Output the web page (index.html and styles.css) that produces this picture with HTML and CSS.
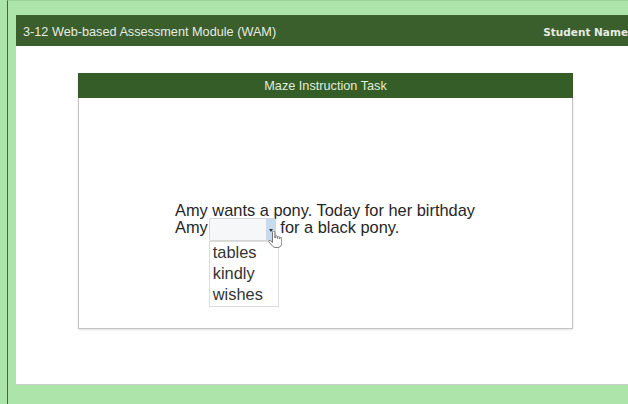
FILE: index.html
```html
<!DOCTYPE html>
<html lang="en">
<head>
<meta charset="utf-8">
<title>WAM - Maze Instruction Task</title>
<link rel="stylesheet" href="styles.css">
</head>
<body>
<div class="frame">
  <div class="app">
    <header class="topbar">
      <span class="app-name">3-12 Web-based Assessment Module (WAM)</span>
      <span class="student">Student Name</span>
    </header>
    <main class="panel">
      <section class="task">
        <h1 class="task-title">Maze Instruction Task</h1>
        <div class="task-body">
          <div class="passage">
            <div class="line">Amy wants a pony. Today for her birthday</div>
            <div class="line">Amy<span class="choice"><span class="choice-arrow"></span><span class="choice-list"><span class="option">tables</span><span class="option">kindly</span><span class="option">wishes</span></span><svg class="pointer" width="14" height="18" viewBox="0 0 14 18"><path d="M4.5 1.2c0-.7.5-1.2 1.2-1.2s1.2.5 1.2 1.2V7h.3V5.8c0-.6.5-1 1.1-1s1.1.4 1.1 1V7.4h.2V6.6c0-.6.5-1 1-1s1 .4 1 1v1.2h.2v-.3c0-.6.4-1 1-1s1 .4 1 1v4.3c0 2.6-1.6 4.7-4 4.7H7.3c-1.2 0-2.2-.6-2.9-1.6L1 11.1c-.4-.5-.3-1.2.2-1.6.5-.4 1.2-.3 1.6.2l1.7 1.9V1.2z" fill="#fff" stroke="#666" stroke-width=".9"/></svg></span> for a black pony.</div>
          </div>
        </div>
      </section>
    </main>
  </div>
</div>
</body>
</html>
```
FILE: styles.css
```css
html, body {
  margin: 0;
  padding: 0;
}

body {
  width: 628px;
  height: 404px;
  overflow: hidden;
  background: #ade4a9;
  font-family: "Liberation Sans", Arial, sans-serif;
}

.frame {
  margin-left: 7px;
  height: 404px;
  box-sizing: border-box;
  border-left: 1px solid #40683b;
  border-top: 1px solid #9ad596;
  padding: 14px 0 0 8px;
}

.app {
  width: 626px;
}

.topbar {
  display: flex;
  align-items: center;
  justify-content: space-between;
  height: 31px;
  padding: 2px 0 0 7px;
  box-sizing: border-box;
  background: #3a5e2c;
  color: #e6ebe3;
}

.app-name {
  font-size: 12.7px;
}

.student {
  font-family: "DejaVu Sans", Verdana, sans-serif;
  font-weight: bold;
  font-size: 10.5px;
  padding-right: 14px;
}

.panel {
  height: 339px;
  box-sizing: border-box;
  background: #fff;
  border-bottom: 1px solid #c9cfc8;
  padding: 27px 0 0 62px;
}

.task {
  width: 495px;
  box-shadow: 0 1px 2px rgba(0, 0, 0, 0.12);
}

.task-title {
  margin: 0;
  height: 25px;
  line-height: 26px;
  background: #355d27;
  color: #e2ecdb;
  font-size: 12.7px;
  font-weight: normal;
  text-align: center;
}

.task-body {
  height: 231px;
  box-sizing: border-box;
  border: 1px solid #c4c4c4;
  border-top: none;
  padding: 104px 0 0 96px;
}

.passage {
  font-size: 16.4px;
  line-height: 17px;
  color: #262626;
}

.line {
  white-space: nowrap;
}

.choice {
  position: relative;
  display: inline-block;
  vertical-align: top;
  width: 67px;
  height: 23px;
  box-sizing: border-box;
  margin: -1px 0 -5px 1px;
  border: 1px solid #d3d7da;
  border-radius: 2px;
  background: #f6f7f8;
}

.choice-arrow {
  position: absolute;
  right: 0;
  top: 0;
  bottom: 0;
  width: 9px;
  background: #c7dbee;
}

.choice-arrow::after {
  content: "";
  position: absolute;
  left: 3px;
  top: 10px;
  border-left: 2px solid transparent;
  border-right: 2px solid transparent;
  border-top: 3px solid #333;
}

.choice-list {
  position: absolute;
  left: -1px;
  top: 22px;
  width: 70px;
  box-sizing: border-box;
  padding: 0 0 1px 3px;
  background: #fff;
  border: 1px solid #dcdcdc;
  font-size: 16.4px;
  line-height: 21px;
  color: #333;
}

.option {
  display: block;
}

.pointer {
  position: absolute;
  left: 58px;
  top: 12px;
}
```
